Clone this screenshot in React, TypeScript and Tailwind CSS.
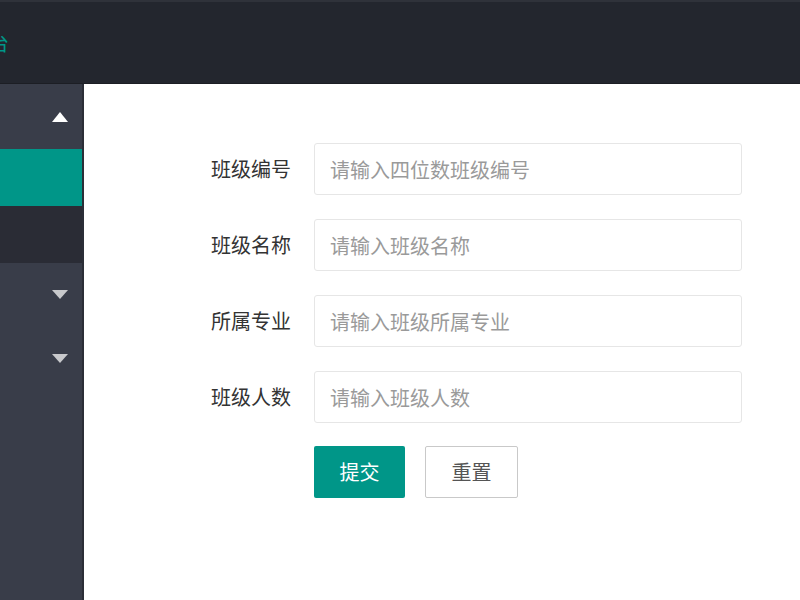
import React from 'react';

const fields = [
    {label: '班级编号', placeholder: '请输入四位数班级编号'},
    {label: '班级名称', placeholder: '请输入班级名称'},
    {label: '所属专业', placeholder: '请输入班级所属专业'},
    {label: '班级人数', placeholder: '请输入班级人数'},
];

const Caret: React.FC<{up?: boolean; className?: string}> = ({up, className}) => (
    <svg width="16" height="10" viewBox="0 0 16 10" className={className}>
        {up ? <polygon points="8,0 16,10 0,10" fill="currentColor"/> : <polygon points="0,0 16,0 8,9" fill="currentColor"/>}
    </svg>
);

const App: React.FC = () => {
    return (
        <div className="w-[800px] h-[600px] flex flex-col overflow-hidden bg-white"
             style={{fontFamily: '"Noto Sans CJK SC", "Noto Sans", sans-serif'}}>
            {/* header, title scrolled off to the left */}
            <div className="h-[84px] shrink-0 bg-[#23262e] border-t-2 border-[#2f323a] border-b border-b-[#1c1e24] flex items-center overflow-hidden">
                <span className="text-[20px] leading-none text-[#009688] -ml-[11px] whitespace-nowrap">台</span>
            </div>

            <div className="flex flex-1 min-h-0">
                {/* sidebar */}
                <div className="w-[84px] shrink-0 bg-[#393d49] border-r-2 border-[#2b2e37] flex flex-col">
                    <div className="h-[65px] flex items-center justify-end pr-[14px]">
                        <Caret up className="text-white"/>
                    </div>
                    <div className="h-[57px] bg-[#009688]"/>
                    <div className="h-[57px] bg-[#2a2c35]"/>
                    <div className="h-[64px] flex items-center justify-end pr-[14px]">
                        <Caret className="text-[#c8c9cc]"/>
                    </div>
                    <div className="h-[64px] flex items-center justify-end pr-[14px]">
                        <Caret className="text-[#c8c9cc]"/>
                    </div>
                </div>

                {/* main */}
                <div className="flex-1 bg-white pt-[59px]">
                    <div className="flex flex-col gap-[24px]">
                        {fields.map((f) => (
                            <div key={f.label} className="flex items-center">
                                <label className="w-[207px] text-right text-[20px] text-[#333333]">{f.label}</label>
                                <input
                                    placeholder={f.placeholder}
                                    className="ml-[23px] w-[428px] h-[52px] border border-[#e6e6e6] rounded-[3px] px-[15px] text-[20px] text-[#333] placeholder:text-[#9a9a9a] outline-none"
                                />
                            </div>
                        ))}
                    </div>
                    <div className="flex ml-[230px] mt-[23px] gap-[20px]">
                        <button className="w-[91px] h-[52px] bg-[#009688] text-white text-[20px] rounded-[2px]">提交</button>
                        <button className="w-[93px] h-[52px] bg-white border border-[#c9c9c9] text-[#555] text-[20px] rounded-[2px]">重置</button>
                    </div>
                </div>
            </div>
        </div>
    );
};

export default App;
